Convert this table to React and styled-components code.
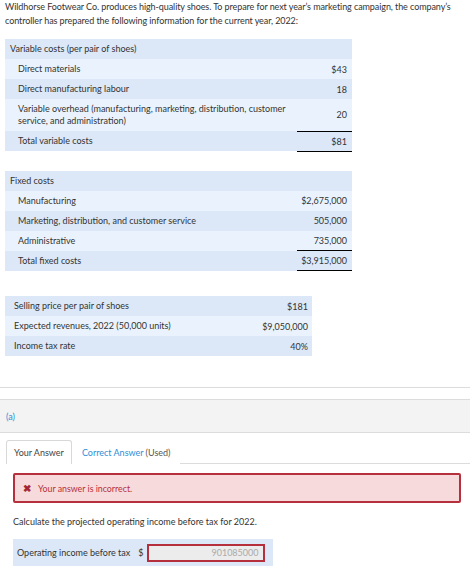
import React from 'react';
import styled, { createGlobalStyle } from 'styled-components';

const GlobalStyle = createGlobalStyle`
  body {
    margin: 0;
    background: #fff;
    font-family: Lato, "Open Sans", sans-serif;
    color: #333;
  }
`;

const Page = styled.div`
  width: 470px;
  height: 571px;
  overflow: hidden;
`;

const Intro = styled.p`
  margin: 0;
  padding: 0 5px;
  font-size: 9px;
  line-height: 14px;
  letter-spacing: -0.08px;
`;

const Table = styled.table`
  border-collapse: collapse;
  width: ${p => p.width}px;
  margin: ${p => p.top}px 0 0 5px;
  font-size: 9px;
`;

const Row = styled.tr`
  background: ${p => (p.light ? '#eaf3fd' : '#dce8f8')};
  height: ${p => p.tall || 20}px;
`;

const Label = styled.td`
  padding: 0 0 0 ${p => p.indent}px;
  line-height: 12px;
`;

const Value = styled.td`
  width: ${p => p.width || 50}px;
  padding: 0 ${p => p.right || 5}px 0 0;
  text-align: right;
  border-top: ${p => (p.total ? '1px solid #000' : 'none')};
  border-bottom: ${p => (p.total ? '1px solid #000' : 'none')};
`;

const Divider = styled.div`
  margin-top: 31px;
  border-top: 1px solid #dcdcdc;
`;

const PartBar = styled.div`
  margin-top: 11px;
  height: 32px;
  background: #f3f3f3;
  border-top: 1px solid #dcdcdc;
  border-bottom: 1px solid #dcdcdc;
  display: flex;
  align-items: center;
  padding-left: 6px;
  color: #2d8fd8;
  font-size: 9px;
`;

const Tabs = styled.div`
  margin: 6px 0 0 6px;
  display: flex;
  align-items: flex-end;
  border-bottom: 1px solid #dcdcdc;
  height: 24px;
  font-size: 9px;
`;

const Tab = styled.div`
  height: 23px;
  display: flex;
  align-items: center;
  padding: 0 ${p => p.pad}px;
  border: ${p => (p.active ? '1px solid #d8d8d8' : '1px solid transparent')};
  border-bottom: none;
  border-radius: 3px 3px 0 0;
  background: #fff;
  margin-bottom: -1px;
  color: #444;
`;

const Link = styled.span`
  color: #2d8fd8;
`;

const Used = styled.span`
  color: #555;
  margin-left: 2px;
`;

const Alert = styled.div`
  margin: 9px 9px 0 13px;
  height: 30px;
  box-sizing: border-box;
  border: 2px solid #b5303c;
  border-radius: 2px;
  background: #f7dadc;
  display: flex;
  align-items: center;
  padding-left: 8px;
  color: #b5303c;
  font-size: 8.8px;
`;

const Cross = styled.span`
  font-size: 10px;
  font-weight: bold;
  margin-right: 7px;
  color: #a32632;
`;

const Prompt = styled.p`
  margin: 13px 0 0 13px;
  font-size: 9px;
  line-height: 12px;
`;

const AnswerRow = styled.div`
  margin: 11px 0 0 13px;
  width: 260px;
  height: 27px;
  background: #dce8f8;
  display: flex;
  align-items: center;
  padding-left: 4px;
  box-sizing: border-box;
  font-size: 9px;
`;

const Dollar = styled.span`
  margin: 0 4px 0 8px;
`;

const Input = styled.div`
  width: 118px;
  height: 18px;
  box-sizing: border-box;
  border: 2px solid #b5303c;
  background: #ececec;
  color: #aaa;
  text-align: right;
  padding-right: 5px;
  line-height: 14px;
  font-size: 9px;
`;

const variable = [
  ['Direct materials', '$43'],
  ['Direct manufacturing labour', '18'],
];

const fixed = [
  ['Manufacturing', '$2,675,000'],
  ['Marketing, distribution, and customer service', '505,000'],
  ['Administrative', '735,000'],
];

const other = [
  ['Selling price per pair of shoes', '$181'],
  ['Expected revenues, 2022 (50,000 units)', '$9,050,000'],
  ['Income tax rate', '40%'],
];

const App = () => {
  return (
    <Page>
      <GlobalStyle />
      <Intro>
        Wildhorse Footwear Co. produces high-quality shoes. To prepare for next year’s marketing campaign, the company’s
        controller has prepared the following information for the current year, 2022:
      </Intro>

      <Table width={347} top={11}>
        <tbody>
          <Row>
            <Label indent={5}>Variable costs (per pair of shoes)</Label>
            <Value width={50} />
          </Row>
          {variable.map(([label, value], i) => (
            <Row key={label} light={i % 2 === 0}>
              <Label indent={13}>{label}</Label>
              <Value>{value}</Value>
            </Row>
          ))}
          <Row light tall={32}>
            <Label indent={13}>
              Variable overhead (manufacturing, marketing, distribution, customer<br />
              service, and administration)
            </Label>
            <Value>20</Value>
          </Row>
          <Row>
            <Label indent={13}>Total variable costs</Label>
            <Value total>$81</Value>
          </Row>
        </tbody>
      </Table>

      <Table width={347} top={19}>
        <tbody>
          <Row>
            <Label indent={5}>Fixed costs</Label>
            <Value />
          </Row>
          {fixed.map(([label, value], i) => (
            <Row key={label} light={i % 2 === 0}>
              <Label indent={13}>{label}</Label>
              <Value>{value}</Value>
            </Row>
          ))}
          <Row>
            <Label indent={13}>Total fixed costs</Label>
            <Value total>$3,915,000</Value>
          </Row>
        </tbody>
      </Table>

      <Table width={307} top={25}>
        <tbody>
          {other.map(([label, value], i) => (
            <Row key={label} light={i % 2 === 1}>
              <Label indent={9}>{label}</Label>
              <Value right={4}>{value}</Value>
            </Row>
          ))}
        </tbody>
      </Table>

      <Divider />
      <PartBar>(a)</PartBar>

      <Tabs>
        <Tab active pad={7}>Your Answer</Tab>
        <Tab pad={9}>
          <Link>Correct Answer</Link>
          <Used>(Used)</Used>
        </Tab>
      </Tabs>

      <Alert>
        <Cross>✖</Cross>
        Your answer is incorrect.
      </Alert>

      <Prompt>Calculate the projected operating income before tax for 2022.</Prompt>

      <AnswerRow>
        Operating income before tax
        <Dollar>$</Dollar>
        <Input>901085000</Input>
      </AnswerRow>
    </Page>
  );
};

export default App;
